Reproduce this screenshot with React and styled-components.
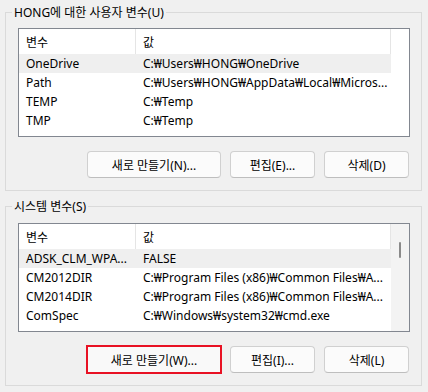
import React from "react";
import styled, { createGlobalStyle } from "styled-components";

const Global = createGlobalStyle`
  html, body { margin: 0; padding: 0; background: #f0f0f0; }
  body {
    font-family: "Noto Sans", "Noto Sans CJK KR", sans-serif;
    font-size: 12px;
    color: #000;
  }
`;

const Page = styled.div`
  width: 428px;
  height: 392px;
  box-sizing: border-box;
  padding: 4px 6px 0 5px;
  display: flex;
  flex-direction: column;
  gap: 7px;
  overflow: hidden;
`;

const Group = styled.fieldset`
  margin: 0;
  padding: 0;
  min-width: 0;
  border: 1px solid #dadada;
  border-radius: 0;
`;

const Legend = styled.legend`
  margin-left: 6px;
  padding: 0 2px;
  line-height: 17px;
  height: 17px;
  font-size: 12px;
  color: #000;
`;

const GroupBody = styled.div`
  display: flex;
  flex-direction: column;
  padding: ${(p) => p.$top}px 11px 12px 12px;
`;

const List = styled.div`
  height: 109px;
  box-sizing: border-box;
  border: 1px solid #828790;
  background: #fff;
  display: flex;
  overflow: hidden;
`;

const Table = styled.div`
  flex: 1;
  display: flex;
  flex-direction: column;
  overflow: hidden;
`;

const Header = styled.div`
  display: grid;
  grid-template-columns: 117px 255px;
  height: 25px;
  flex: none;
`;

const HeaderCell = styled.div`
  border-right: 1px solid #e5e5e5;
  padding-left: 7px;
  display: flex;
  align-items: center;
  white-space: nowrap;
  overflow: hidden;
`;

const Row = styled.div`
  display: grid;
  grid-template-columns: 117px 255px;
  height: 19px;
  flex: none;
  background: ${(p) => (p.$selected ? "#efefef" : "transparent")};
`;

const Cell = styled.div`
  padding-left: 7px;
  display: flex;
  align-items: center;
  white-space: nowrap;
  overflow: hidden;
  text-overflow: ellipsis;
`;

const ScrollArea = styled.div`
  width: 18px;
  flex: none;
  box-sizing: border-box;
  background: ${(p) => (p.$visible ? "#f3f3f3" : "#fff")};
  border-left: 1px solid ${(p) => (p.$visible ? "#f3f3f3" : "#fff")};
  position: relative;
`;

const Thumb = styled.div`
  position: absolute;
  left: 7px;
  top: 18px;
  width: 2px;
  height: 16px;
  border-radius: 1px;
  background: #8a8a8a;
`;

const Buttons = styled.div`
  margin-top: 14px;
  display: flex;
  justify-content: flex-end;
  gap: 9px;
  padding-right: 1px;
`;

const Button = styled.button`
  width: ${(p) => p.$w}px;
  height: 27px;
  box-sizing: border-box;
  border: 1px solid #d0d0d0;
  border-bottom-color: #bebebe;
  border-radius: 4px;
  background: #fbfbfb;
  font-family: inherit;
  font-size: 12px;
  color: #000;
  padding: 0;
  display: flex;
  align-items: center;
  justify-content: center;
  white-space: nowrap;
  ${(p) =>
    p.$marked &&
    `
    border: none;
    border-radius: 0;
    background: #f9f9f9;
    box-shadow: 0 0 0 1px #e81123, inset 0 0 0 1px #e81123;
  `}
`;

const userVars = [
  ["OneDrive", "C:₩Users₩HONG₩OneDrive"],
  ["Path", "C:₩Users₩HONG₩AppData₩Local₩Micros..."],
  ["TEMP", "C:₩Temp"],
  ["TMP", "C:₩Temp"],
];

const sysVars = [
  ["ADSK_CLM_WPA...", "FALSE"],
  ["CM2012DIR", "C:₩Program Files (x86)₩Common Files₩A..."],
  ["CM2014DIR", "C:₩Program Files (x86)₩Common Files₩A..."],
  ["ComSpec", "C:₩Windows₩system32₩cmd.exe"],
];

function VarList({ rows, scroll }) {
  return (
    <List>
      <Table>
        <Header>
          <HeaderCell>변수</HeaderCell>
          <HeaderCell>값</HeaderCell>
        </Header>
        {rows.map(([k, v], i) => (
          <Row key={k} $selected={i === 0}>
            <Cell>{k}</Cell>
            <Cell>{v}</Cell>
          </Row>
        ))}
      </Table>
      <ScrollArea $visible={scroll}>{scroll && <Thumb />}</ScrollArea>
    </List>
  );
}

export default function App() {
  return (
    <>
      <Global />
      <Page>
        <Group>
          <Legend>HONG에 대한 사용자 변수(U)</Legend>
          <GroupBody $top={7}>
            <VarList rows={userVars} />
            <Buttons>
              <Button $w={134}>새로 만들기(N)...</Button>
              <Button $w={85}>편집(E)...</Button>
              <Button $w={85}>삭제(D)</Button>
            </Buttons>
          </GroupBody>
        </Group>
        <Group>
          <Legend>시스템 변수(S)</Legend>
          <GroupBody $top={8}>
            <VarList rows={sysVars} scroll />
            <Buttons>
              <Button $w={134} $marked>
                새로 만들기(W)...
              </Button>
              <Button $w={85}>편집(I)...</Button>
              <Button $w={85}>삭제(L)</Button>
            </Buttons>
          </GroupBody>
        </Group>
      </Page>
    </>
  );
}
